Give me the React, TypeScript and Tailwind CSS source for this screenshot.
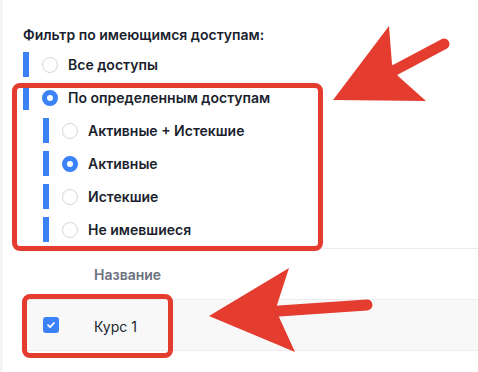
import React from 'react';

type Option = {
  label: string;
  checked: boolean;
  nested?: boolean;
};

const options: Option[] = [
  { label: 'Все доступы', checked: false },
  { label: 'По определенным доступам', checked: true },
  { label: 'Активные + Истекшие', checked: false, nested: true },
  { label: 'Активные', checked: true, nested: true },
  { label: 'Истекшие', checked: false, nested: true },
  { label: 'Не имевшиеся', checked: false, nested: true },
];

function Radio({ checked }: { checked: boolean }) {
  return checked ? (
    <span className="w-4 h-4 rounded-full border-[5px] border-[#3b82f6] bg-white shrink-0" />
  ) : (
    <span className="w-4 h-4 rounded-full border border-[#d4d6db] bg-white shrink-0" />
  );
}

export default function App() {
  return (
    <div
      className="relative w-[478px] h-[372px] overflow-hidden bg-white flex"
      style={{ fontFamily: 'Inter, "Noto Sans", sans-serif' }}
    >
      {/* левая полоска */}
      <div className="w-[3px] bg-[#f3f4f8] shrink-0" />

      <div className="flex-1 pl-[20px] pt-[25px]">
        <div className="text-[14px] leading-[20px] font-semibold text-[#1b1f2e]">
          Фильтр по имеющимся доступам:
        </div>

        {/* список фильтров */}
        <div className="mt-[7px] flex flex-col gap-[8px]">
          {options.map((opt) => (
            <div
              key={opt.label}
              className={`flex items-center h-[25px] ${opt.nested ? 'ml-[20px]' : ''}`}
            >
              <span className="w-[6px] h-full bg-[#3b82f6] shrink-0" />
              <span className="ml-[13px] flex items-center">
                <Radio checked={opt.checked} />
              </span>
              <span className="ml-[10px] text-[14px] font-semibold text-[#1b1f2e] whitespace-nowrap">
                {opt.label}
              </span>
            </div>
          ))}
        </div>

        {/* таблица */}
        <div className="mt-[6px] border-t border-[#ececf0]">
          <div className="h-[50px] flex items-center">
            <div className="w-[71px]" />
            <span className="text-[14px] font-semibold text-[#6b7280]">Название</span>
          </div>
          <div className="h-[52px] flex items-center bg-[#f8f8f9] border-y border-[#ececf0]">
            <div className="w-[71px] pl-[20px] flex items-center">
              <span className="w-4 h-4 rounded-[3px] bg-[#3b82f6] flex items-center justify-center">
                <svg width="10" height="10" viewBox="0 0 10 10" fill="none">
                  <path
                    d="M2 5.2 L4.1 7.2 L8 3"
                    stroke="white"
                    strokeWidth="1.8"
                    strokeLinecap="round"
                    strokeLinejoin="round"
                  />
                </svg>
              </span>
            </div>
            <span className="text-[14px] text-[#1b1f2e] mt-[3px]">Курс 1</span>
          </div>
        </div>
      </div>

      {/* аннотации */}
      <div className="absolute left-[12px] top-[83px] w-[311px] h-[168px] border-[5px] border-[#e43d30] rounded-[8px] pointer-events-none" />
      <div className="absolute left-[22px] top-[294px] w-[151px] h-[64px] border-[5px] border-[#e43d30] rounded-[8px] pointer-events-none" />

      <svg
        className="absolute left-0 top-0 pointer-events-none"
        width="478"
        height="372"
        viewBox="0 0 478 372"
      >
        <line x1="395" y1="70" x2="444" y2="44" stroke="#e43d30" strokeWidth="11" strokeLinecap="round" />
        <polygon points="333,100 389,26 392,64 398,76 426,101" fill="#e43d30" />
        <line x1="279" y1="311" x2="367" y2="305" stroke="#e43d30" strokeWidth="11" strokeLinecap="round" />
        <polygon points="209,316 289,268 277,305 279,317 295,352" fill="#e43d30" />
      </svg>
    </div>
  );
}
